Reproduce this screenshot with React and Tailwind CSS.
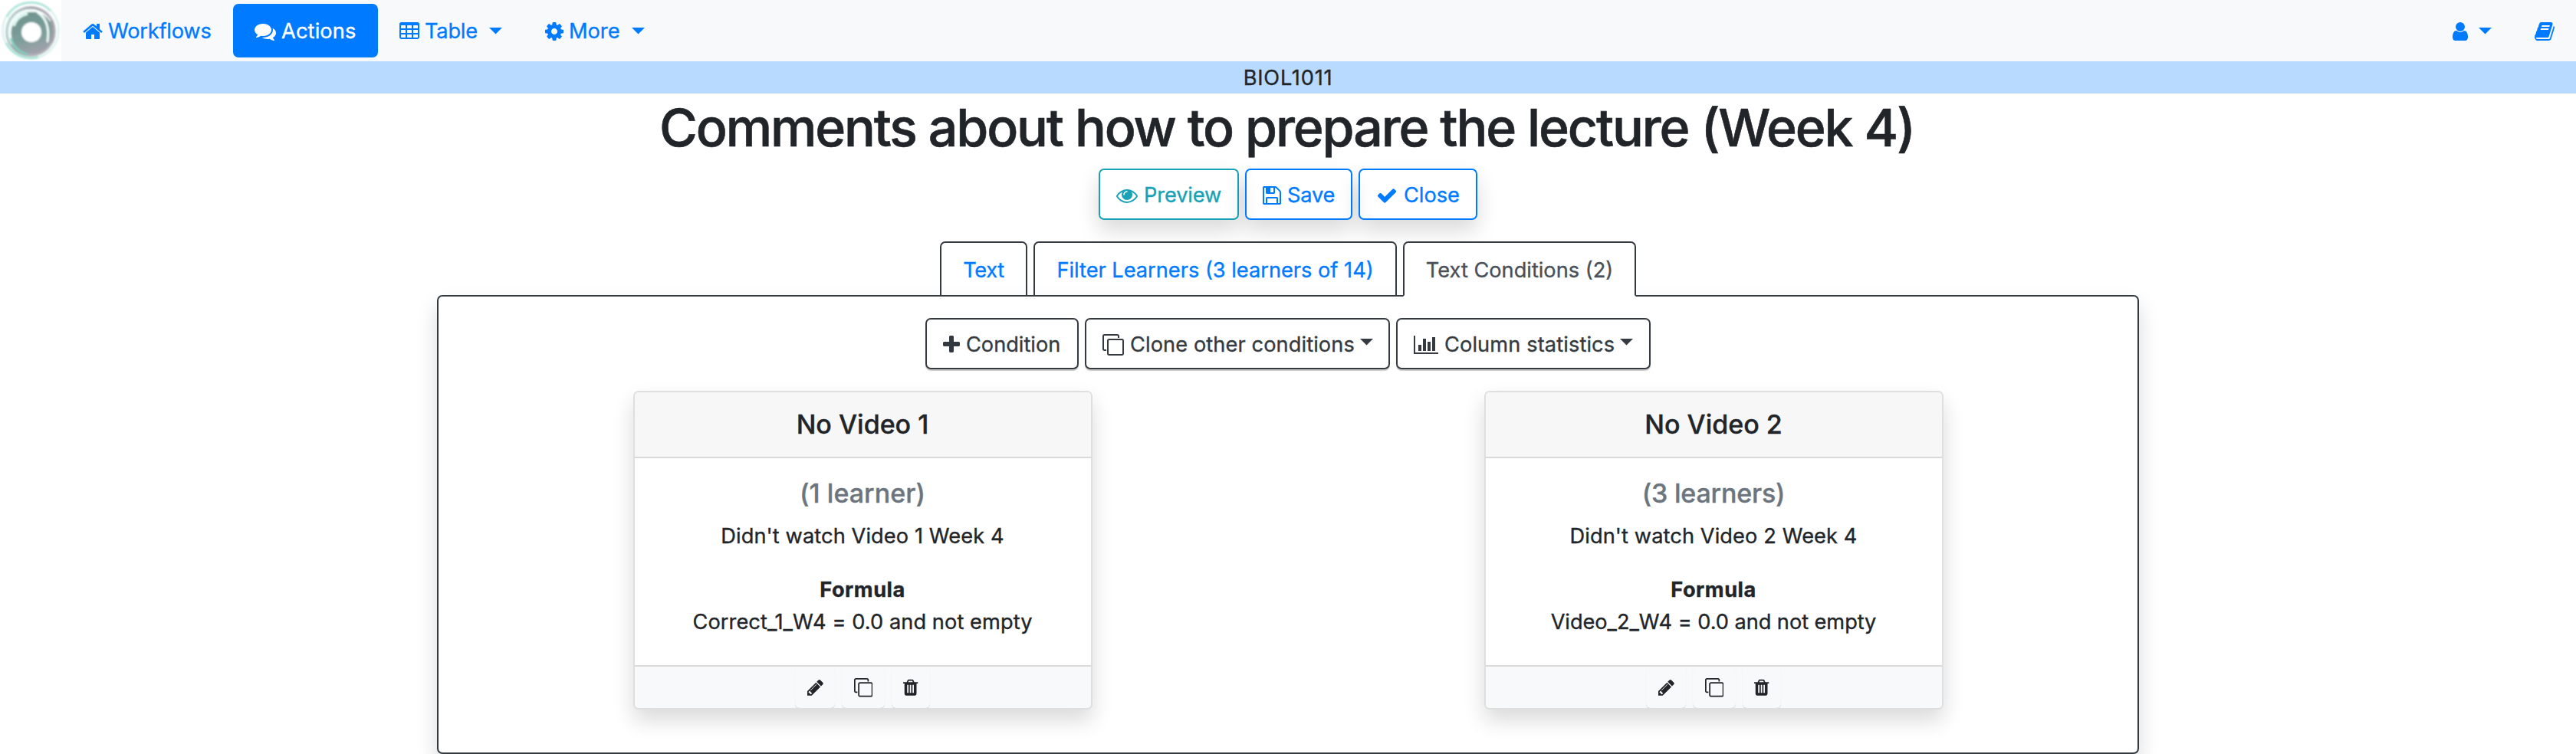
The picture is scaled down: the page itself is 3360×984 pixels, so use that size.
const ICONS = {
  home: [1664, "M1472 992v480q0 26-19 45t-45 19h-384v-384h-256v384h-384q-26 0-45-19t-19-45v-480q0-1 .5-3t.5-3l575-474 575 474q1 2 1 6zm223-69l-62 74q-8 9-21 11h-3q-13 0-21-7l-692-577-692 577q-12 8-24 7-13-2-21-11l-62-74q-8-10-7-23.5t11-21.5l719-599q32-26 76-26t76 26l244 204v-195q0-14 9-23t23-9h192q14 0 23 9t9 23v408l219 182q10 8 11 21.5t-7 23.5z"],
  comments: [1792, "M1408 768q0 139-94 257t-256.5 186.5-353.5 68.5q-86 0-176-16-124 88-278 128-36 9-86 16h-3q-11 0-20.5-8t-11.5-21q-1-3-1-6.5t.5-6.5 2-6l2.5-5 3.5-5.5 4-5 4.5-5 4-4.5q5-6 23-25t26-29.5 22.5-29 25-38.5 20.5-44q-124-72-195-177t-71-224q0-139 94-257t256.5-186.5 353.5-68.5 353.5 68.5 256.5 186.5 94 257zm384 256q0 120-71 224.5t-195 176.5q10 24 20.5 44t25 38.5 22.5 29 26 29.5 23 25q1 1 4 4.5t4.5 5 4 5 3.5 5.5l2.5 5 2 6 .5 6.5-1 6.5q-3 14-13 22t-22 7q-50-7-86-16-154-40-278-128-90 16-176 16-271 0-472-132 58 4 88 4 161 0 309-45t264-129q125-92 192-212t67-254q0-77-23-152 129 71 204 178t75 230z"],
  table: [1664, "M224 128h1344q66 0 113 47t47 113v1088q0 66-47 113t-113 47h-1344q-66 0-113-47t-47-113v-1088q0-66 47-113t113-47zM224 384q-32 0-32 32v192q0 32 32 32h320q32 0 32-32v-192q0-32-32-32zM736 384q-32 0-32 32v192q0 32 32 32h320q32 0 32-32v-192q0-32-32-32zM1248 384q-32 0-32 32v192q0 32 32 32h320q32 0 32-32v-192q0-32-32-32zM224 768q-32 0-32 32v192q0 32 32 32h320q32 0 32-32v-192q0-32-32-32zM736 768q-32 0-32 32v192q0 32 32 32h320q32 0 32-32v-192q0-32-32-32zM1248 768q-32 0-32 32v192q0 32 32 32h320q32 0 32-32v-192q0-32-32-32zM224 1152q-32 0-32 32v192q0 32 32 32h320q32 0 32-32v-192q0-32-32-32zM736 1152q-32 0-32 32v192q0 32 32 32h320q32 0 32-32v-192q0-32-32-32zM1248 1152q-32 0-32 32v192q0 32 32 32h320q32 0 32-32v-192q0-32-32-32z"],
  cog: [1536, "M1152 896q0-106-75-181t-181-75-181 75-75 181 75 181 181 75 181-75 75-181zm512-109v222q0 12-8 23t-20 13l-185 28q-19 54-39 91 35 50 107 138 10 12 10 25t-9 23q-27 37-99 108t-94 71q-12 0-26-9l-138-108q-44 23-91 38-16 136-29 186-7 28-36 28h-222q-14 0-24.5-8.5t-11.5-21.5l-28-184q-49-16-90-37l-141 107q-10 9-25 9-14 0-25-11-126-114-165-168-7-10-7-23 0-12 8-23 15-21 51-66.5t54-70.5q-27-50-41-99l-183-27q-13-2-21-12.5t-8-23.5v-222q0-12 8-23t19-13l186-28q14-46 39-92-40-57-107-138-10-12-10-24 0-10 9-23 26-36 98.5-107.5t94.5-71.5q13 0 26 10l138 107q44-23 91-38 16-136 29-186 7-28 36-28h222q14 0 24.5 8.5t11.5 21.5l28 184q49 16 90 37l142-107q9-9 24-9 13 0 25 10 129 119 165 170 7 8 7 22 0 12-8 23-15 21-51 66.5t-54 70.5q26 50 41 98l183 28q13 2 21 12.5t8 23.5z"],
  user: [1280, "M1536 1399q0 109-62.5 187t-150.5 78h-854q-88 0-150.5-78t-62.5-187q0-85 8.5-160.5t31.5-152 58.5-131 94-89 134.5-34.5q131 128 313 128t313-128q76 0 134.5 34.5t94 89 58.5 131 31.5 152 8.5 160.5zm-256-887q0 159-112.5 271.5t-271.5 112.5-271.5-112.5-112.5-271.5 112.5-271.5 271.5-112.5 271.5 112.5 112.5 271.5z"],
  book: [1664, "M1703 478q40 57 18 129l-275 906q-19 64-76.5 107.5t-122.5 43.5h-923q-77 0-148.5-53.5t-99.5-131.5q-24-67-2-127 0-4 3-27t4-37q1-8-3-21.5t-3-19.5q2-11 8-21t16.5-23.5 16.5-23.5q23-38 45-91.5t30-91.5q3-10 .5-30t-.5-28q3-11 17-28t17-23q21-36 42-92t25-90q1-9-2.5-32t.5-28q4-13 22-30.5t22-22.5q19-26 42.5-84.5t27.5-96.5q1-8-3-25.5t-2-26.5q2-8 9-18t18-23 17-21q8-12 16.5-30.5t15-35 16-36 19.5-32 26.5-23.5 36-11.5 47.5 5.5l-1 3q38-9 51-9h761q74 0 114 56t18 130l-274 906q-36 119-71.5 153.5t-128.5 34.5h-869q-27 0-38 15-11 16-1 43 24 70 144 70h923q29 0 56-15.5t35-41.5l300-987q7-22 5-57 38 15 59 43zm-1064 2q-4 13 2 22.5t20 9.5h608q13 0 25.5-9.5t16.5-22.5l21-64q4-13-2-22.5t-20-9.5h-608q-13 0-25.5 9.5t-16.5 22.5zm-83 256q-4 13 2 22.5t20 9.5h608q13 0 25.5-9.5t16.5-22.5l21-64q4-13-2-22.5t-20-9.5h-608q-13 0-25.5 9.5t-16.5 22.5z"],
  eye: [1792, "M1664 960q-152-236-381-353 61 104 61 225 0 185-131.5 316.5t-316.5 131.5-316.5-131.5-131.5-316.5q0-121 61-225-229 117-381 353 133 205 333.5 326.5t434.5 121.5 434.5-121.5 333.5-326.5zm-720-384q0-20-14-34t-34-14q-125 0-214.5 89.5t-89.5 214.5q0 20 14 34t34 14 34-14 14-34q0-86 61-147t147-61q20 0 34-14t14-34zm848 384q0 34-20 69-140 230-376.5 368.5t-499.5 138.5-499.5-139-376.5-368q-20-35-20-69t20-69q140-229 376.5-368t499.5-139 499.5 139 376.5 368q20 35 20 69z"],
  save: [1536, "M512 1536h768v-384h-768v384zm896 0h128v-896q0-14-10-38.5t-20-34.5l-281-281q-10-10-34-20t-39-10v416q0 40-28 68t-68 28h-576q-40 0-68-28t-28-68v-416h-128v1280h128v-416q0-40 28-68t68-28h832q40 0 68 28t28 68v416zm-384-928v-320q0-13-9.5-22.5t-22.5-9.5h-192q-13 0-22.5 9.5t-9.5 22.5v320q0 13 9.5 22.5t22.5 9.5h192q13 0 22.5-9.5t9.5-22.5zm640 32v928q0 40-28 68t-68 28h-1344q-40 0-68-28t-28-68v-1344q0-40 28-68t68-28h928q40 0 88 20t76 48l280 280q28 28 48 76t20 88z"],
  check: [1792, "M1671 566q0 40-28 68l-724 724-136 136q-28 28-68 28t-68-28l-136-136-362-362q-28-28-28-68t28-68l136-136q28-28 68-28t68 28l294 295 656-657q28-28 68-28t68 28l136 136q28 28 28 68z"],
  plus: [1408, "M1600 736v192q0 40-28 68t-68 28h-416v416q0 40-28 68t-68 28h-192q-40 0-68-28t-28-68v-416h-416q-40 0-68-28t-28-68v-192q0-40 28-68t68-28h416v-416q0-40 28-68t68-28h192q40 0 68 28t28 68v416h416q40 0 68 28t28 68z"],
  clone: [1792, "M1664 1632v-1088q0-13-9.5-22.5t-22.5-9.5h-1088q-13 0-22.5 9.5t-9.5 22.5v1088q0 13 9.5 22.5t22.5 9.5h1088q13 0 22.5-9.5t9.5-22.5zm128-1088v1088q0 66-47 113t-113 47h-1088q-66 0-113-47t-47-113v-1088q0-66 47-113t113-47h1088q66 0 113 47t47 113zm-384-384v160h-128v-160q0-13-9.5-22.5t-22.5-9.5h-1088q-13 0-22.5 9.5t-9.5 22.5v1088q0 13 9.5 22.5t22.5 9.5h160v128h-160q-66 0-113-47t-47-113v-1088q0-66 47-113t113-47h1088q66 0 113 47t47 113z"],
  chart: [2048, "M512 896v512h-256v-512h256zm384-512v1024h-256v-1024h256zm1024 1152v128h-2048v-1536h128v1408h1920zm-640-896v768h-256v-768h256zm384-384v1152h-256v-1152h256z"],
  pencil: [1536, "M491 1536l91-91-235-235-91 91v107h128v128h107zm523-928q0-22-22-22-10 0-17 7l-542 542q-7 7-7 17 0 22 22 22 10 0 17-7l542-542q7-7 7-17zm-54-192l416 416-832 832h-416v-416zm683 96q0 53-37 90l-166 166-416-416 166-165q36-38 90-38 53 0 91 38l235 234q37 39 37 91z"],
  trash: [1408, "M704 1376v-704q0-14-9-23t-23-9h-64q-14 0-23 9t-9 23v704q0 14 9 23t23 9h64q14 0 23-9t9-23zm256 0v-704q0-14-9-23t-23-9h-64q-14 0-23 9t-9 23v704q0 14 9 23t23 9h64q14 0 23-9t9-23zm256 0v-704q0-14-9-23t-23-9h-64q-14 0-23 9t-9 23v704q0 14 9 23t23 9h64q14 0 23-9t9-23zm-544-992h448l-48-117q-7-9-17-11h-317q-10 2-17 11zm928 32v64q0 14-9 23t-23 9h-96v948q0 83-47 143.5t-113 60.5h-832q-66 0-113-58.5t-47-141.5v-952h-96q-14 0-23-9t-9-23v-64q0-14 9-23t23-9h309l70-167q15-37 54-63t79-26h320q40 0 79 26t54 63l70 167h309q14 0 23 9t9 23z"],
};

function Icon({ name, size = 28, className = "" }) {
  const [w, d] = ICONS[name];
  return (
    <svg
      viewBox={`${(1792 - w) / 2} 0 ${w} 1792`}
      width={(w / 1792) * size}
      height={size}
      fill="currentColor"
      fillRule={name === "table" ? "evenodd" : "nonzero"}
      className={`shrink-0 ${className}`}
      aria-hidden="true"
    >
      <path d={d} />
    </svg>
  );
}

function Caret({ className = "" }) {
  return (
    <svg width="17" height="9" viewBox="0 0 17 9" fill="currentColor" className={`shrink-0 ${className}`} aria-hidden="true">
      <path d="M0 0h17L8.500 8.500z" />
    </svg>
  );
}

function Logo() {
  return (
    <svg width="80" height="80" viewBox="0 0 80 80" className="shrink-0 bg-white" aria-hidden="true">
      <defs>
        <linearGradient id="disc" x1="0.3" y1="0" x2="0.6" y2="1">
          <stop offset="0" stopColor="#71938f" />
          <stop offset="0.6" stopColor="#7d9f9b" />
          <stop offset="1" stopColor="#a5a2ac" />
        </linearGradient>
        <linearGradient id="rim" x1="0" y1="0" x2="1" y2="0.4">
          <stop offset="0" stopColor="#bfe5dc" />
          <stop offset="0.45" stopColor="#a3a2ab" />
          <stop offset="1" stopColor="#b6b8be" />
        </linearGradient>
        <filter id="soft" x="-10%" y="-10%" width="120%" height="120%"><feGaussianBlur stdDeviation="0.8" /></filter>
      </defs>
      <g fill="none" filter="url(#soft)">
        <circle cx="40" cy="39.500" r="36.500" stroke="#d9f1ec" strokeWidth="2.500" />
        <path d="M9 22A36 36 0 0 1 66 14" stroke="#a9e3d6" strokeWidth="2.500" />
        <path d="M8 56A36.500 36.500 0 0 0 50 74.500" stroke="#a9e3d6" strokeWidth="3" />
        <circle cx="40" cy="41" r="31" stroke="url(#rim)" strokeWidth="3.500" />
        <circle cx="42" cy="43" r="27.500" fill="url(#disc)" />
        <path d="M16 57A29 29 0 0 1 22 21Q31 12 45 14" stroke="#effcf9" strokeWidth="3.500" />
        <path d="M18 34Q22 21 36 18" stroke="#dffaf3" strokeWidth="3" />
        <path d="M14 50Q19 67 36 71" stroke="#6fd0bb" strokeWidth="2.500" />
        <path d="M49 16Q66 27 62 54" stroke="#f2fffc" strokeWidth="2.800" strokeLinecap="round" />
        <path d="M67 27Q72 42 66 55" stroke="#a09fa8" strokeWidth="3.500" />
        <circle cx="41" cy="42" r="13" fill="#fff" />
      </g>
    </svg>
  );
}

function NavItem({ icon, label, caret, active, className }) {
  return (
    <a className={`flex h-[70px] shrink-0 items-center rounded-[7px] pl-7 ${active ? "bg-[#007bff] text-white" : "text-[#007bff]"} ${className}`}>
      <Icon name={icon} className="mt-0.5" />
      <span className="pt-0.5 pl-[7px]">{label}</span>
      {caret && <Caret className="ml-[15px]" />}
    </a>
  );
}

function Button({ icon, label, caret, className }) {
  return (
    <button className={`flex h-[67px] shrink-0 items-center rounded-[7px] border-2 pl-[21px] ${className}`}>
      <Icon name={icon} className="mt-[3px]" />
      <span className="pt-[3px] pl-2">{label}</span>
      {caret && <Caret className="mb-1 ml-[7px]" />}
    </button>
  );
}

function Tab({ label, className }) {
  return (
    <a className={`h-[72px] shrink-0 rounded-t-[7px] border-2 border-[#343a40] pt-[15px] text-center leading-[42px] ${className}`}>
      {label}
    </a>
  );
}

function FooterButton({ icon, className }) {
  return (
    <button className={`flex h-[54px] justify-center rounded-[6px] bg-[#f8f9fa] pt-[15px] shadow-[0_1px_1px_rgba(0,0,0,0.15)] ${className}`}>
      <Icon name={icon} size={24.5} />
    </button>
  );
}

function ConditionCard({ title, count, countClass, description, formula, formulaClass }) {
  return (
    <div className="flex flex-1 justify-center">
      <section className="flex h-[416px] w-[599px] flex-col overflow-hidden rounded-[7px] border-2 border-[#dfdfdf] bg-white text-center shadow-[0_14px_28px_rgba(0,0,0,0.15)]">
        <header className="h-[86px] border-b-2 border-[#dadada] bg-[#f7f7f7] pt-[21px]">
          <h5 className="text-[34px] leading-[42px] font-medium">{title}</h5>
        </header>
        <div className="h-[270px] pt-[25px]">
          <h6 className={`text-[34px] leading-[42px] font-medium text-[#6c757d] ${countClass}`}>{count}</h6>
          <p className="mt-[14px] leading-[42px] tracking-[0.1px]">{description}</p>
          <p className="mt-7 leading-[42px] font-bold tracking-[0.5px]">Formula</p>
          <p className={`leading-[42px] ${formulaClass}`}>{formula}</p>
        </div>
        <footer className="flex h-[56px] justify-center gap-[9px] overflow-hidden border-t-2 border-[#dadada] bg-[#f8f9fa]">
          <FooterButton icon="pencil" className="w-[52px]" />
          <FooterButton icon="clone" className="w-[56px]" />
          <FooterButton icon="trash" className="w-[50px]" />
        </footer>
      </section>
    </div>
  );
}

export default function App() {
  return (
    <div className="h-[984px] w-[3360px] overflow-hidden bg-white font-['Inter',sans-serif] text-[27.2px] leading-[42px] whitespace-nowrap text-[#212529] [-webkit-text-stroke:0.35px]">
      <nav className="flex h-20 items-center bg-[#f8f9fa]">
        <Logo />
        <NavItem icon="home" label="Workflows" className="w-[224px] tracking-[-0.2px]" />
        <NavItem icon="comments" label="Actions" active className="w-[189px] tracking-[0.15px]" />
        <NavItem icon="table" label="Table" caret className="w-[190px] tracking-[-0.2px]" />
        <NavItem icon="cog" label="More" caret className="w-[184px]" />
        <div className="ml-auto flex items-center text-[#007bff]">
          <Icon name="user" className="mt-0.5" />
          <Caret className="ml-[14px]" />
          <Icon name="book" className="mt-0.5 mr-7 ml-[56px]" />
        </div>
      </nav>

      <div className="h-[42px] bg-[#b8daff] pt-px text-center tracking-[0.8px]">BIOL1011</div>

      <h1 className="h-[98px] pt-0.5 pr-[3px] text-center text-[68px] leading-[84px] font-medium tracking-[-2.13px] [-webkit-text-stroke:0.6px]">
        Comments about how to prepare the lecture (Week 4)
      </h1>

      <div className="flex justify-center gap-2">
        <Button icon="eye" label="Preview" className="w-[183px] border-[#17a2b8] tracking-[-0.1px] text-[#17a2b8] shadow-[0_14px_28px_rgba(0,0,0,0.15)]" />
        <Button icon="save" label="Save" className="w-[140px] border-[#007bff] tracking-[-0.2px] text-[#007bff] shadow-[0_14px_28px_rgba(0,0,0,0.15)]" />
        <Button icon="check" label="Close" className="w-[155px] border-[#007bff] text-[#007bff] shadow-[0_14px_28px_rgba(0,0,0,0.15)]" />
      </div>

      <div className="mt-7 flex justify-center gap-2">
        <Tab label="Text" className="w-[114px] tracking-[-0.35px] text-[#007bff]" />
        <Tab label="Filter Learners (3 learners of 14)" className="w-[474px] text-[#007bff]" />
        <Tab label="Text Conditions (2)" className="z-10 w-[304px] border-b-white bg-white text-[#495057]" />
      </div>

      <main className="mx-auto -mt-0.5 h-[599px] w-[2220px] rounded-[7px] border-2 border-[#343a40] pt-7 shadow-[0_14px_28px_rgba(0,0,0,0.15)]">
        <div className="flex justify-center gap-2">
          <Button icon="plus" label="Condition" className="w-[200px] border-[#343a40] text-[#343a40] shadow-[0_2px_1px_rgba(0,0,0,0.2)]" />
          <Button icon="clone" label="Clone other conditions" caret className="w-[398px] border-[#343a40] tracking-[0.1px] text-[#343a40] shadow-[0_2px_1px_rgba(0,0,0,0.2)]" />
          <Button icon="chart" label="Column statistics" caret className="w-[332px] border-[#343a40] tracking-[0.12px] text-[#343a40] shadow-[0_2px_1px_rgba(0,0,0,0.2)]" />
        </div>
        <div className="-mx-0.5 mt-7 flex">
          <ConditionCard
            title="No Video 1"
            count="(1 learner)"
            countClass="tracking-[0.05px]"
            description="Didn't watch Video 1 Week 4"
            formula="Correct_1_W4 = 0.0 and not empty"
            formulaClass="tracking-[0.08px]"
          />
          <ConditionCard
            title="No Video 2"
            count="(3 learners)"
            countClass="tracking-[-0.2px]"
            description="Didn't watch Video 2 Week 4"
            formula="Video_2_W4 = 0.0 and not empty"
            formulaClass="tracking-[-0.05px]"
          />
        </div>
      </main>
    </div>
  );
}
